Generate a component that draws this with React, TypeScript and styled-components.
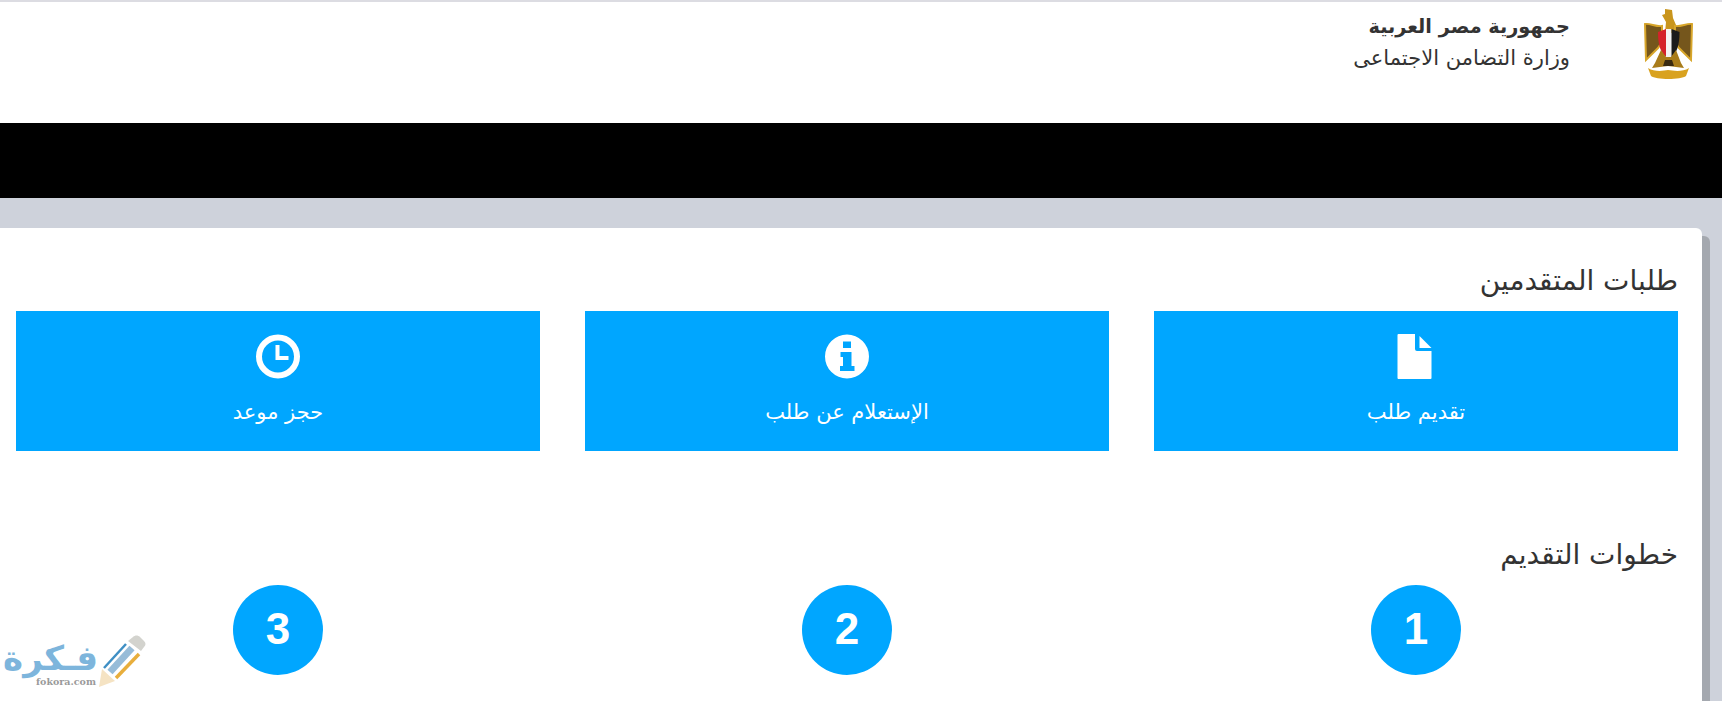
import styled, { createGlobalStyle } from "styled-components";

const GlobalStyle = createGlobalStyle`
  html, body {
    margin: 0;
    padding: 0;
    height: 701px;
    overflow: hidden;
    background: #ced2db;
    font-family: "DejaVu Sans", "Noto Sans", sans-serif;
  }
`;

const Page = styled.div`
  direction: rtl;
  height: 701px;
  overflow: hidden;
  position: relative;
`;

const Header = styled.header`
  height: 121px;
  background: #fff;
  border-top: 2px solid #dcdce2;
  display: flex;
  align-items: flex-start;
  gap: 74px;
  padding-right: 29px;
`;

const Emblem = styled.svg`
  width: 49px;
  height: 72px;
  margin-top: 6px;
  flex: none;
  filter: blur(0.4px);
`;

const Titles = styled.div`
  color: #333;
  padding-top: 11px;
`;

const Country = styled.div`
  font-size: 19.3px;
  font-weight: 700;
  line-height: 28px;
`;

const Ministry = styled.div`
  font-size: 21px;
  line-height: 34px;
`;

const BlackBar = styled.div`
  height: 75px;
  background: #000;
`;

const Card = styled.main`
  margin: 30px 20px 0 -8px;
  height: 520px;
  box-sizing: border-box;
  padding: 35px 24px 0;
  background: #fff;
  border-radius: 6px;
  box-shadow: 8px 8px 0 rgba(0, 0, 0, 0.2);
`;

const SectionTitle = styled.h2<{ $top: number; $bottom: number }>`
  margin: ${({ $top }) => $top}px 0 ${({ $bottom }) => $bottom}px;
  font-size: 28px;
  font-weight: 400;
  line-height: 36px;
  color: #333;
`;

const Row = styled.div`
  display: grid;
  grid-template-columns: repeat(3, 524px);
  gap: 45px;
`;

const ActionButton = styled.a`
  height: 140px;
  box-sizing: border-box;
  padding-top: 23px;
  background: #00a6ff;
  color: #fff;
  display: flex;
  flex-direction: column;
  align-items: center;
`;

const ActionIcon = styled.svg`
  height: 45px;
  width: 45px;
  display: block;
`;

const ActionLabel = styled.span`
  margin-top: 19px;
  font-size: 21px;
  line-height: 28px;
`;

const StepCell = styled.div`
  display: flex;
  justify-content: center;
`;

const StepBadge = styled.div`
  width: 90px;
  height: 90px;
  border-radius: 50%;
  background: #00a6ff;
  color: #fff;
  font-family: "Liberation Sans", Arial, sans-serif;
  font-size: 44px;
  font-weight: 700;
  padding-bottom: 2px;
  box-sizing: border-box;
  display: flex;
  align-items: center;
  justify-content: center;
`;

const Watermark = styled.div`
  position: absolute;
  left: 6px;
  top: 632px;
  width: 142px;
  height: 60px;
  direction: ltr;
`;

const WatermarkName = styled.span`
  position: absolute;
  left: 0;
  top: 1px;
  width: 92px;
  text-align: center;
  direction: rtl;
  font-size: 34px;
  font-weight: 700;
  line-height: 50px;
  color: #7db5dc;
  white-space: nowrap;
`;

const WatermarkSite = styled.span`
  position: absolute;
  left: 30px;
  top: 44px;
  font-family: "DejaVu Serif", serif;
  font-size: 9.5px;
  font-weight: 700;
  line-height: 12px;
  color: #9a9a9a;
`;

const WatermarkPencil = styled.svg`
  position: absolute;
  left: 89px;
  top: 3px;
  width: 52px;
  height: 54px;
`;

const EgyptEmblem = () => (
  <Emblem viewBox="0 0 49 72">
    <path d="M21 1l7 1 1 8 3 7 3 5-6 3h-8l1-11-4-7 3-1z" fill="#c9951c" />
    <path d="M18 18C12 19 6 15 1 16L2 52l12-12 4-6z" fill="#75561c" stroke="#d8a62a" strokeWidth="2" />
    <path d="M31 18c6 1 12-3 17-2l-1 36-12-12-4-6z" fill="#75561c" stroke="#d8a62a" strokeWidth="2" />
    <path d="M14 24l8-3v28C17 45 14 38 14 24z" fill="#d5232b" />
    <path d="M22 21h5.500v28H22z" fill="#f4f4f4" />
    <path d="M27.500 21l8 3c0 14-3 21-8 25z" fill="#1b1b1b" />
    <path d="M17 42l5 7h5l5-7 5 13 3 5-16-2-16 2 3-5z" fill="#a97c1a" />
    <path d="M21 52h7l2 6h-11z" fill="#3a2a10" />
    <path d="M4 60c6 4 15 3 20 2 6 1 15 2 21-2l-3 8c-5 4-30 4-35 0z" fill="#d9a21f" />
  </Emblem>
);

const FileIcon = () => (
  <ActionIcon viewBox="0 0 45 45">
    <path
      d="M3.500 1a1 1 0 0 1 1-1h16.500v15a2 2 0 0 0 2 2H37.500v27a1 1 0 0 1-1 1H4.500a1 1 0 0 1-1-1z"
      fill="#fff"
    />
    <path d="M25.500 2l12 12H25.500z" fill="#fff" />
  </ActionIcon>
);

const InfoIcon = () => (
  <ActionIcon viewBox="0 0 45 45">
    <path
      fillRule="evenodd"
      fill="#fff"
      d="M22 0.500a22 22 0 1 1 0 44a22 22 0 0 1 0-44zM18 7.500v6.500h8v-6.500zM15.500 18v5h2.500v9H15v5h14.500v-5h-3V18z"
    />
  </ActionIcon>
);

const ClockIcon = () => (
  <ActionIcon viewBox="0 0 45 45">
    <circle cx="22" cy="22.500" r="19" fill="none" stroke="#fff" strokeWidth="6" />
    <path d="M19.500 11h4v11h9v4h-13z" fill="#fff" />
  </ActionIcon>
);

const FokoraMark = () => (
  <Watermark>
    <WatermarkName>فـكرة</WatermarkName>
    <WatermarkSite>fokora.com</WatermarkSite>
    <WatermarkPencil viewBox="0 0 52 54">
      <path d="M33 6l5-4c2-2 5-2 7 0l4 4c2 2 2 4 0 6l-3 4z" fill="#d3d3ce" />
      <path d="M4 52l3-18 13 12z" fill="#f5e3c3" />
      <path d="M9 33L31 9" stroke="#3f8fc4" strokeWidth="2.500" fill="none" />
      <path d="M15 37L37 13" stroke="#97bcd8" strokeWidth="7" fill="none" />
      <path d="M21 43L44 19" stroke="#e8ae3c" strokeWidth="3.500" fill="none" />
    </WatermarkPencil>
  </Watermark>
);

const actions = [
  { label: "تقديم طلب", icon: <FileIcon /> },
  { label: "الإستعلام عن طلب", icon: <InfoIcon /> },
  { label: "حجز موعد", icon: <ClockIcon /> },
];

const App = () => (
  <Page>
    <GlobalStyle />
    <Header>
      <EgyptEmblem />
      <Titles>
        <Country>جمهورية مصر العربية</Country>
        <Ministry>وزارة التضامن الاجتماعى</Ministry>
      </Titles>
    </Header>
    <BlackBar />
    <Card>
      <SectionTitle $top={0} $bottom={12}>طلبات المتقدمين</SectionTitle>
      <Row>
        {actions.map((action) => (
          <ActionButton key={action.label}>
            {action.icon}
            <ActionLabel>{action.label}</ActionLabel>
          </ActionButton>
        ))}
      </Row>
      <SectionTitle $top={86} $bottom={12}>خطوات التقديم</SectionTitle>
      <Row>
        {[1, 2, 3].map((step) => (
          <StepCell key={step}>
            <StepBadge>{step}</StepBadge>
          </StepCell>
        ))}
      </Row>
    </Card>
    <FokoraMark />
  </Page>
);

export default App;
